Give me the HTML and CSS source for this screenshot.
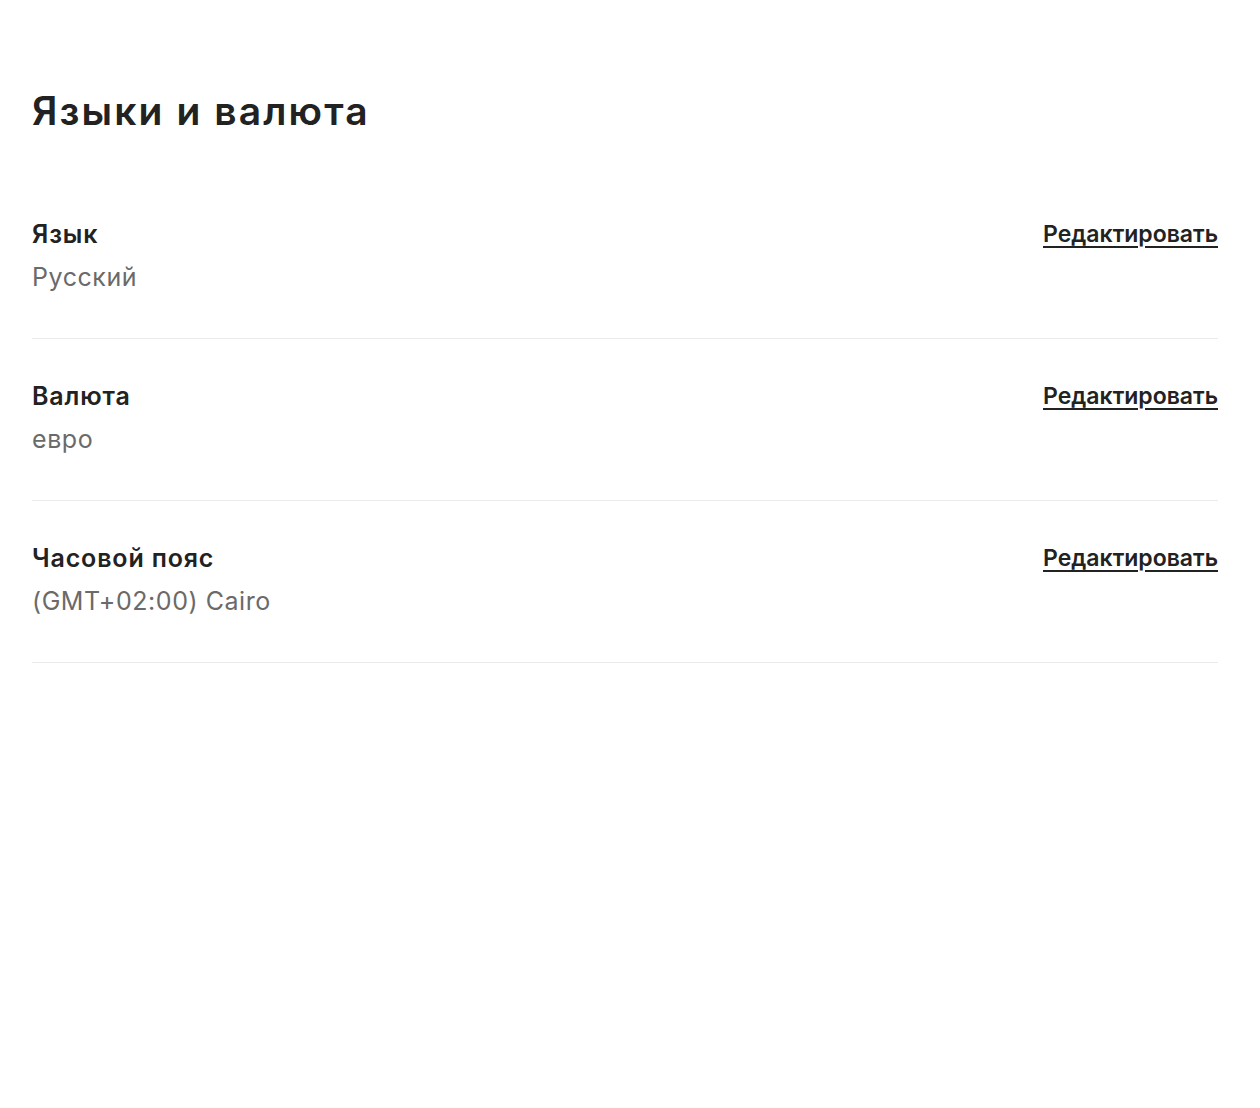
FILE: index.html
```
<!DOCTYPE html>
<html lang="ru">
<head>
<meta charset="utf-8">
<title>Языки и валюта</title>
<link rel="stylesheet" href="styles.css">
</head>
<body>
<main class="page">
  <h1 class="title">Языки и валюта</h1>
  <section class="setting">
    <div class="setting-text">
      <div class="setting-label">Язык</div>
      <div class="setting-value">Русский</div>
    </div>
    <a class="edit" href="#">Редактировать</a>
  </section>
  <section class="setting">
    <div class="setting-text">
      <div class="setting-label">Валюта</div>
      <div class="setting-value">евро</div>
    </div>
    <a class="edit" href="#">Редактировать</a>
  </section>
  <section class="setting">
    <div class="setting-text">
      <div class="setting-label">Часовой пояс</div>
      <div class="setting-value">(GMT+02:00) Cairo</div>
    </div>
    <a class="edit" href="#">Редактировать</a>
  </section>
</main>
</body>
</html>
```
FILE: styles.css
```
body {
  margin: 0;
  background: #fff;
  color: #222;
  font-family: Inter, "Noto Sans", sans-serif;
}
.page {
  padding: 89px 42px 0 32px;
}
.title {
  margin: 0 0 83px;
  font-size: 39px;
  font-weight: 600;
  line-height: 44px;
  letter-spacing: 2.1px;
}
.setting {
  display: flex;
  justify-content: space-between;
  align-items: flex-start;
  padding: 39px 0 43px;
  border-bottom: 1px solid #ebebeb;
}
.setting:first-of-type {
  padding-top: 0;
}
.setting-label {
  font-size: 25px;
  font-weight: 600;
  line-height: 36px;
  letter-spacing: 0.85px;
}
.setting-value {
  margin-top: 7px;
  font-size: 25px;
  line-height: 36px;
  letter-spacing: 0.55px;
  color: #6a6a6a;
}
.edit {
  font-size: 23px;
  font-weight: 600;
  line-height: 36px;
  color: #222;
  text-decoration: underline;
  text-decoration-thickness: 1.5px;
  text-underline-offset: 4px;
}
```
